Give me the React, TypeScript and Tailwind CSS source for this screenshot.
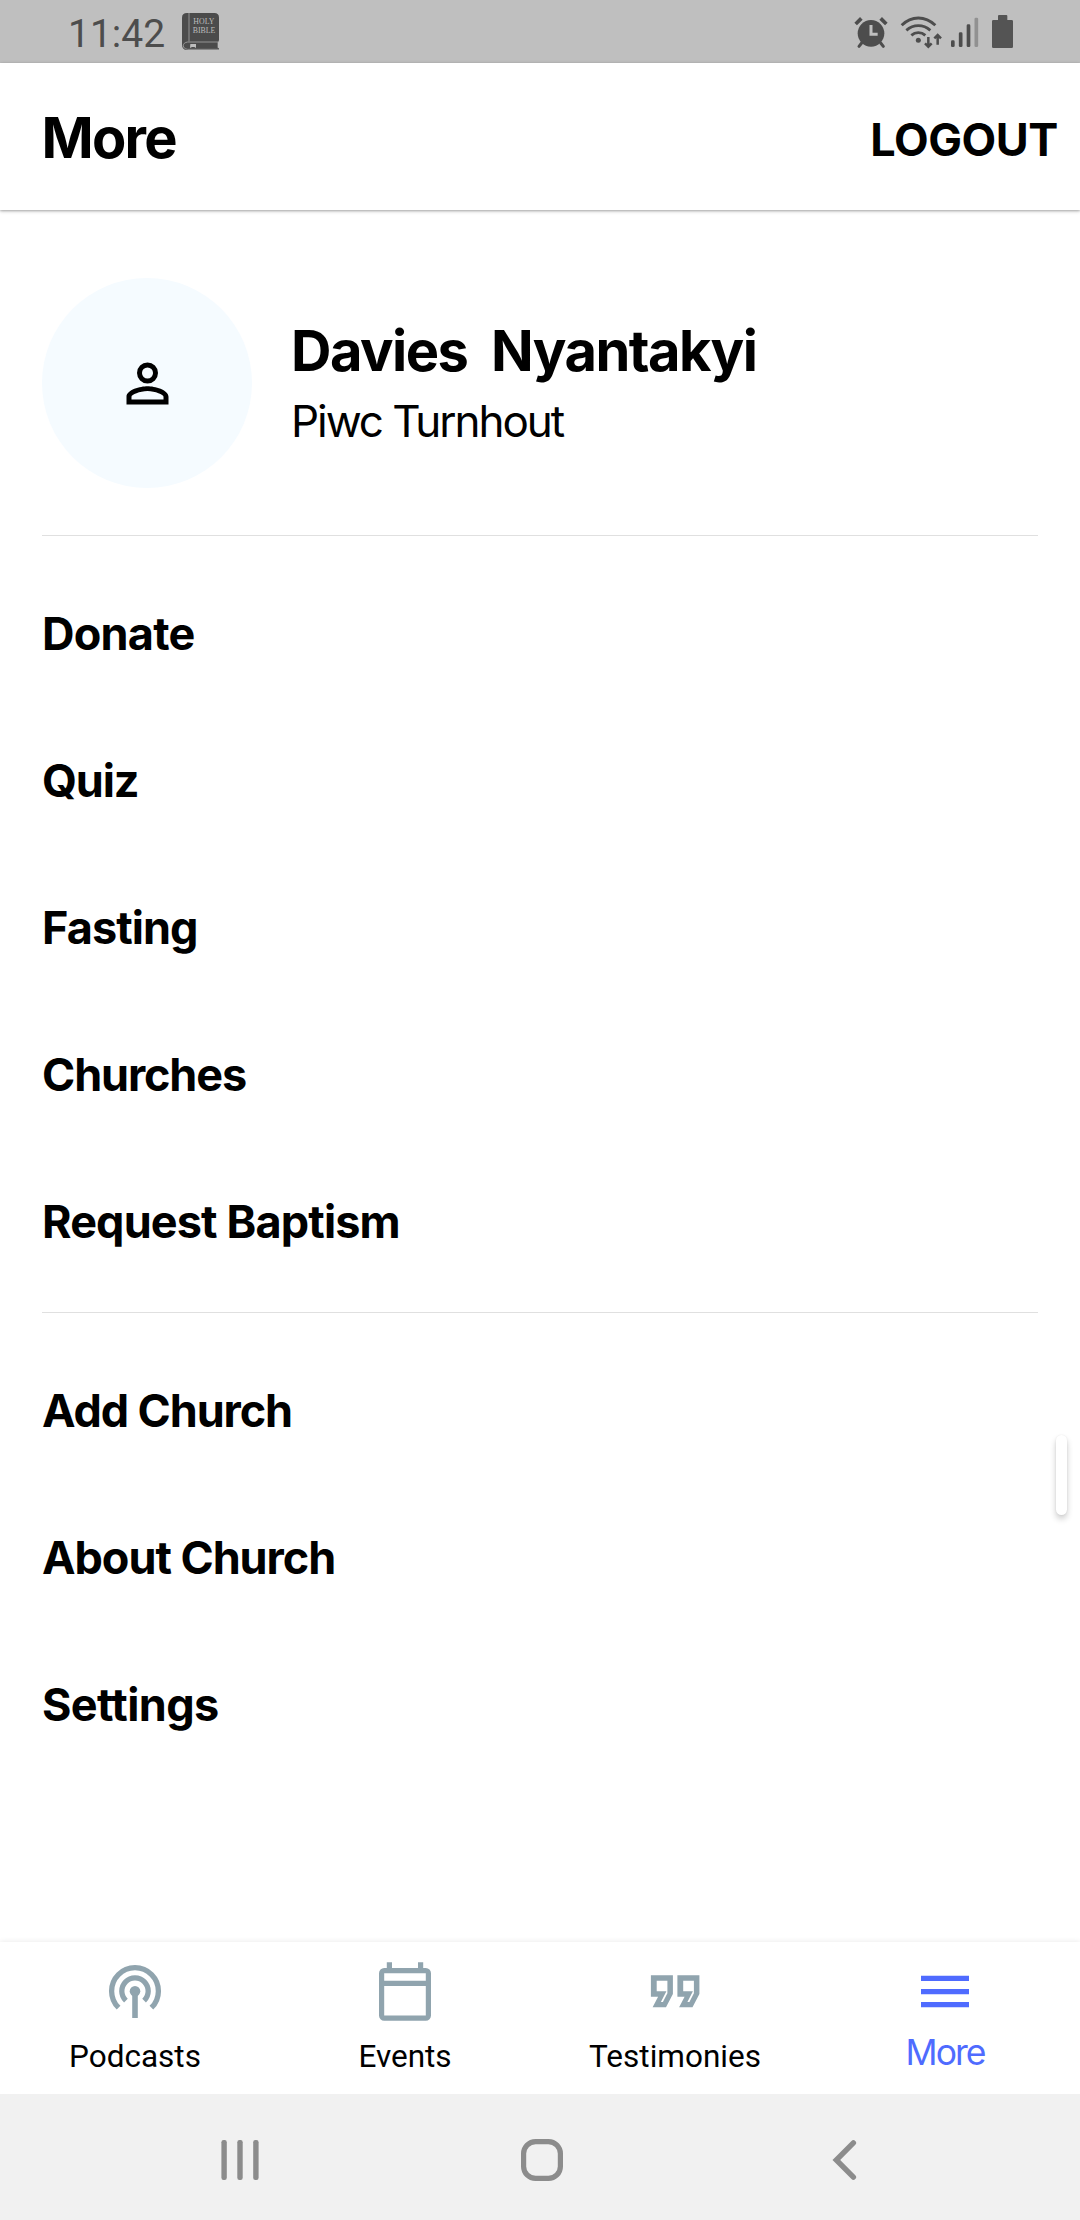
import React from "react";

const primaryLinks = [
  { label: "Donate", tracking: "tracking-[-0.75px]" },
  { label: "Quiz", tracking: "tracking-[-1.1px]" },
  { label: "Fasting", tracking: "tracking-[-0.95px]" },
  { label: "Churches", tracking: "tracking-[-1.13px]" },
  { label: "Request Baptism", tracking: "tracking-[-0.85px]" },
];

const secondaryLinks = [
  { label: "Add Church", tracking: "tracking-[-1.1px]" },
  { label: "About Church", tracking: "tracking-[-1.05px]" },
  { label: "Settings", tracking: "tracking-[-0.6px]" },
];

function BibleIcon() {
  return (
    <svg viewBox="396 39 111 111" className="h-[37px] w-[37px]">
      <path d="M411 39h82q14 0 14 14v66q0 5-4 8v16q4 0 4 4q-1 3-6 3h-90q-15-1-15-16V53q0-14 15-14z" fill="#4b4b4b" />
      <path d="M417 39v85M505 126H413q-13 2-13 11t13 11h92" fill="none" stroke="#a3a3a3" strokeWidth="2.5" />
      <path d="M421 132h17v12l-5-3h-7l-6 3z" fill="#bdbdbd" />
      <g fill="#bcbcbc" fontFamily="Liberation Serif, serif" fontSize="24">
        <text x="430" y="73" textLength="63" lengthAdjust="spacingAndGlyphs">HOLY</text>
        <text x="428" y="99" textLength="68" lengthAdjust="spacingAndGlyphs">BIBLE</text>
      </g>
    </svg>
  );
}

function AlarmIcon() {
  return (
    <svg viewBox="36 42 108 102" className="h-[34px] w-[36px]" fill="none" stroke="#4d4d4d">
      <circle cx="90" cy="97" r="40" fill="#4d4d4d" stroke="none" />
      <path d="M44 69l17-17M119 52l17 17" strokeWidth="11" />
      <path d="M62 126l-8 10M119 126l8 10" strokeWidth="9" strokeLinecap="round" />
      <path d="M90 72v28h20" stroke="#bfbfbf" strokeWidth="9" />
    </svg>
  );
}

function WifiIcon() {
  return (
    <svg viewBox="177 39 129 102" className="h-[34px] w-[43px]" fill="none" stroke="#4d4d4d">
      <circle cx="232" cy="115" r="7.5" fill="#4d4d4d" stroke="none" />
      <path d="M182 70q22-22 50-22t51 22M196 85q16-14 36-14t36 14M211 100q9-8 21-8t21 8" strokeWidth="8.5" />
      <path d="M262 105v29M252 124l10 10 10-10M290 128V99M280 109l10-10 10 10" strokeWidth="7.5" />
    </svg>
  );
}

function SignalIcon() {
  return (
    <svg viewBox="327 45 87 96" className="h-[32px] w-[29px]" fill="#4d4d4d">
      <rect x="330" y="118" width="11" height="20" rx="4" />
      <rect x="353.5" y="94" width="11" height="44" rx="4" />
      <rect x="377" y="70" width="11" height="68" rx="4" />
      <rect x="400.5" y="50" width="11" height="88" rx="4" fill="#919191" />
    </svg>
  );
}

function BatteryIcon() {
  return (
    <svg viewBox="453 45 63 99" className="h-[33px] w-[21px]" fill="#545454">
      <path d="M474 45h22q3 0 3 3v12h13q4 0 4 4v76q0 4-4 4h-55q-4 0-4-4V64q0-4 4-4h14V48q0-3 3-3z" />
    </svg>
  );
}

function PersonIcon() {
  return (
    <svg viewBox="0 0 24 24" className="size-[63px]" fill="#000" fillRule="evenodd">
      <path d="M12 4a4 4 0 1 1 0 8a4 4 0 0 1 0-8zm0 1.9a2.1 2.1 0 1 0 0 4.2a2.1 2.1 0 0 0 0-4.2zM12 13c2.67 0 8 1.33 8 4v3H4v-3c0-2.67 5.33-4 8-4zm0 1.9c-2.97 0-6.1 1.46-6.1 2.1v1.1h12.2V17c0-.64-3.13-2.1-6.1-2.1z" />
    </svg>
  );
}

function PodcastIcon() {
  return (
    <svg viewBox="0 0 66 66" className="size-[66px]" fill="none" stroke="#90a4ae" strokeWidth="5.3">
      <path d="M16.6 49.7A23.4 23.4 0 1 1 49.4 49.7" />
      <path d="M23.9 42.6A13.2 13.2 0 1 1 42.1 42.6" />
      <path d="M33 34v26" strokeWidth="5.6" />
      <circle cx="33" cy="33.2" r="5.3" fill="#90a4ae" stroke="none" />
    </svg>
  );
}

function CalendarIcon() {
  return (
    <svg viewBox="0 0 66 66" className="size-[66px]" fill="none" stroke="#90a4ae" strokeWidth="5.2">
      <rect x="9.6" y="12.6" width="46.8" height="47.5" rx="2.6" />
      <path d="M9 25.4h48M17.4 4.3V11M48.6 4.3V11" />
    </svg>
  );
}

const quoteMark =
  "M8.9 17.3H30.9V36L24 49.3H10.6L16.1 38.7H8.9zM14.7 22.7V33.3H24.4L18.9 44H20.9L25.4 35.3V22.7z";

function QuoteIcon() {
  return (
    <svg viewBox="0 0 66 66" className="size-[66px]" fill="#90a4ae" fillRule="evenodd">
      <path d={quoteMark} />
      <path d={quoteMark} transform="translate(26.5 0)" />
    </svg>
  );
}

function MenuIcon() {
  return (
    <svg viewBox="0 0 66 66" className="size-[66px]" fill="#4f6bff">
      <path d="M9 17.7h48v5.3H9zM9 31h48v5.2H9zM9 44h48v5.2H9z" />
    </svg>
  );
}

const tabs = [
  { label: "Podcasts", icon: <PodcastIcon /> },
  { label: "Events", icon: <CalendarIcon /> },
  { label: "Testimonies", icon: <QuoteIcon /> },
];

function LinkList({ links }: { links: { label: string; tracking: string }[] }) {
  return (
    <ul>
      {links.map(({ label, tracking }) => (
        <li key={label} className="flex h-[147px] items-center">
          <a className={`text-[45px] leading-none font-bold ${tracking}`}>{label}</a>
        </li>
      ))}
    </ul>
  );
}

export default function App() {
  return (
    <div className="relative flex h-[2220px] w-[1080px] flex-col overflow-hidden bg-white font-['Inter',sans-serif] text-black">
      <div className="flex h-[63px] shrink-0 items-center justify-between bg-[#bfbfbf] pr-[67px] pl-[68px] font-['Roboto',sans-serif] text-[#4d4d4d]">
        <div className="flex items-center gap-[17px]">
          <span className="pt-1.5 text-[39px] leading-[57px]">11:42</span>
          <BibleIcon />
        </div>
        <div className="flex items-center">
          <AlarmIcon />
          <div className="pl-[11px]"><WifiIcon /></div>
          <div className="pl-[7px]"><SignalIcon /></div>
          <div className="pl-[13px]"><BatteryIcon /></div>
        </div>
      </div>

      <header className="flex h-[147px] shrink-0 items-center justify-between bg-white pr-[22px] pl-[41.5px] shadow-[0_1px_2px_rgba(0,0,0,0.2),0_1px_4px_rgba(0,0,0,0.22)]">
        <h1 className="pt-0.5 text-[56px] leading-[72px] font-bold tracking-[-1.75px]">More</h1>
        <button className="pt-1.5 text-[45px] leading-[60px] font-bold tracking-[-0.4px]">LOGOUT</button>
      </header>

      <main className="grow px-[42px] pt-[68px]">
        <section className="flex h-[210px] items-center gap-[39px]">
          <div className="flex size-[210px] items-center justify-center rounded-full bg-[#f5fbff]">
            <PersonIcon />
          </div>
          <div className="pb-1">
            <h2 className="text-[56px] leading-[80px] font-bold tracking-[-1.5px] whitespace-pre">{"Davies  Nyantakyi"}</h2>
            <p className="text-[44px] leading-[60px] tracking-[-2.05px]">Piwc Turnhout</p>
          </div>
        </section>
        <hr className="mt-[47px] border-[#e0e0e0]" />
        <div className="pt-6 pb-[17px]">
          <LinkList links={primaryLinks} />
        </div>
        <hr className="border-[#e0e0e0]" />
        <div className="pt-6">
          <LinkList links={secondaryLinks} />
        </div>
      </main>

      <div className="absolute top-[1435px] left-[1056px] h-20 w-[11px] rounded-full bg-white shadow-[0_4px_6px_rgba(0,0,0,0.2),0_0_2px_rgba(0,0,0,0.08)]" />

      <nav className="grid h-[152px] shrink-0 grid-cols-4 bg-white pt-4 shadow-[0_-1px_5px_rgba(0,0,0,0.07)]">
        {tabs.map(({ label, icon }) => (
          <a key={label} className="flex flex-col items-center gap-[3px] font-['Roboto',sans-serif] text-[31.5px] leading-[60px]">
            {icon}
            <span>{label}</span>
          </a>
        ))}
        <a className="flex flex-col items-center gap-[3px] text-[35.5px] leading-[52px] tracking-[-2px] text-[#4f6bff]">
          <MenuIcon />
          <span>More</span>
        </a>
      </nav>

      <div className="flex h-[126px] shrink-0 items-center justify-between bg-[#f1f1f1] pt-1.5 pr-[212px] pl-[216px]">
        <svg viewBox="0 0 48 48" className="size-12" fill="#8c8c8c">
          <rect x="5.4" y="4.1" width="5.4" height="39.8" rx="2.2" />
          <rect x="21.3" y="4.1" width="5.4" height="39.8" rx="2.2" />
          <rect x="37.2" y="4.1" width="5.4" height="39.8" rx="2.2" />
        </svg>
        <svg viewBox="0 0 48 48" className="size-12" fill="none" stroke="#8c8c8c" strokeWidth="5.2">
          <rect x="5.6" y="5.6" width="36.8" height="36.8" rx="12" />
        </svg>
        <svg viewBox="0 0 48 48" className="size-12" fill="none" stroke="#8c8c8c" strokeWidth="5.4" strokeLinecap="round">
          <path d="M33.4 6.8L16.3 24L33.4 41.2" />
        </svg>
      </div>
    </div>
  );
}
